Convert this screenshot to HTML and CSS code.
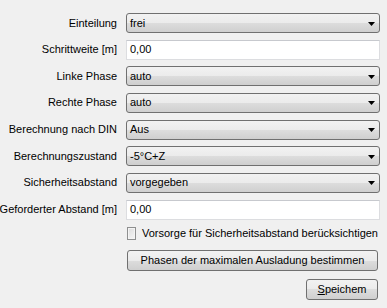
FILE: index.html
```html
<!DOCTYPE html>
<html>
<head>
<meta charset="utf-8">
<link rel="stylesheet" href="styles.css">
</head>
<body>
<div class="panel">
  <div class="form">
    <label class="lbl">Einteilung</label>
    <div class="combo"><span class="val">frei</span><svg class="arrow" width="7" height="4" viewBox="0 0 7 4"><polygon points="0,0 7,0 3.5,4" fill="#000"/></svg></div>

    <label class="lbl">Schrittweite [m]</label>
    <div class="text"><span class="val">0,00</span></div>

    <label class="lbl">Linke Phase</label>
    <div class="combo"><span class="val">auto</span><svg class="arrow" width="7" height="4" viewBox="0 0 7 4"><polygon points="0,0 7,0 3.5,4" fill="#000"/></svg></div>

    <label class="lbl">Rechte Phase</label>
    <div class="combo"><span class="val">auto</span><svg class="arrow" width="7" height="4" viewBox="0 0 7 4"><polygon points="0,0 7,0 3.5,4" fill="#000"/></svg></div>

    <label class="lbl">Berechnung nach DIN</label>
    <div class="combo"><span class="val">Aus</span><svg class="arrow" width="7" height="4" viewBox="0 0 7 4"><polygon points="0,0 7,0 3.5,4" fill="#000"/></svg></div>

    <label class="lbl">Berechnungszustand</label>
    <div class="combo"><span class="val">-5°C+Z</span><svg class="arrow" width="7" height="4" viewBox="0 0 7 4"><polygon points="0,0 7,0 3.5,4" fill="#000"/></svg></div>

    <label class="lbl">Sicherheitsabstand</label>
    <div class="combo"><span class="val">vorgegeben</span><svg class="arrow" width="7" height="4" viewBox="0 0 7 4"><polygon points="0,0 7,0 3.5,4" fill="#000"/></svg></div>

    <label class="lbl">Geforderter Abstand [m]</label>
    <div class="text"><span class="val">0,00</span></div>
  </div>

  <div class="actions">
    <div class="check-row"><span class="checkbox"></span><span class="check-label">Vorsorge für Sicherheitsabstand berücksichtigen</span></div>
    <div class="btn wide">Phasen der maximalen Ausladung bestimmen</div>
    <div class="save-row"><div class="btn save"><u>S</u>peichem</div></div>
  </div>
</div>
</body>
</html>
```

FILE: styles.css
```css
html, body {
  margin: 0;
  padding: 0;
  background: #f0f0f0;
}
body {
  width: 387px;
  height: 308px;
  overflow: hidden;
  font-family: "Liberation Sans", Arial, sans-serif;
  font-size: 11px;
  color: #000;
}
.panel {
  padding-top: 13px;
}
.form {
  display: grid;
  grid-template-columns: 117px 254px;
  grid-auto-rows: 20px;
  column-gap: 9px;
  row-gap: 6.67px;
}
.lbl {
  display: flex;
  align-items: center;
  justify-content: flex-end;
  white-space: nowrap;
  line-height: 13px;
}
.combo {
  box-sizing: border-box;
  height: 20px;
  border: 1px solid #707070;
  border-radius: 3px;
  background: linear-gradient(to bottom, #f2f2f2 0%, #ebebeb 50%, #dddddd 50%, #cfcfcf 100%);
  display: flex;
  align-items: center;
  justify-content: space-between;
  padding: 0 4px 0 3px;
}
.text {
  box-sizing: border-box;
  height: 20px;
  background: #fff;
  border: 1px solid #dcdde0;
  border-top-color: #c7c9ce;
  display: flex;
  align-items: center;
  padding: 0 3px;
}
.val {
  line-height: 13px;
  white-space: nowrap;
}
.arrow {
  display: block;
  margin-top: 1px;
}
.actions {
  margin-left: 127px;
  width: 251px;
  padding-top: 7px;
}
.check-row {
  display: flex;
  align-items: center;
  height: 13px;
}
.checkbox {
  box-sizing: border-box;
  width: 13px;
  height: 13px;
  border: 1px solid #8e8f8f;
  background: linear-gradient(135deg, #dcdcdc 0%, #f6f6f6 100%);
  box-shadow: inset 0 0 0 1px #f4f4f4;
  margin-right: 6px;
}
.check-label {
  white-space: nowrap;
  line-height: 13px;
}
.btn {
  box-sizing: border-box;
  height: 21px;
  border: 1px solid #707070;
  border-radius: 3px;
  background: linear-gradient(to bottom, #f2f2f2 0%, #ebebeb 50%, #dddddd 50%, #cfcfcf 100%);
  display: flex;
  align-items: center;
  justify-content: center;
  white-space: nowrap;
  line-height: 13px;
}
.wide {
  margin-top: 10px;
}
.save-row {
  display: flex;
  justify-content: flex-end;
  margin-top: 8px;
}
.save {
  width: 72px;
}
u {
  text-decoration: underline;
}
```
